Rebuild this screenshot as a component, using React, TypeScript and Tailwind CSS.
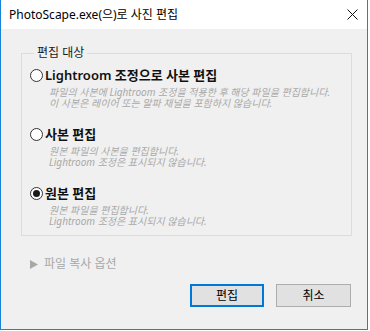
const font = { fontFamily: '"Noto Sans", "Noto Sans CJK KR", sans-serif' };

type Option = { label: string; lines: string[]; checked?: boolean };

const options: Option[] = [
  {
    label: "Lightroom 조정으로 사본 편집",
    lines: [
      "파일의 사본에 Lightroom 조정을 적용한 후 해당 파일을 편집합니다.",
      "이 사본은 레이어 또는 알파 채널을 포함하지 않습니다.",
    ],
  },
  {
    label: "사본 편집",
    lines: ["원본 파일의 사본을 편집합니다.", "Lightroom 조정은 표시되지 않습니다."],
  },
  {
    label: "원본 편집",
    lines: ["원본 파일을 편집합니다.", "Lightroom 조정은 표시되지 않습니다."],
    checked: true,
  },
];

function Radio({ checked }: { checked?: boolean }) {
  return (
    <span className="w-[13px] h-[13px] rounded-full border border-[#333333] bg-white flex items-center justify-center shrink-0">
      {checked && <span className="w-[7px] h-[7px] rounded-full bg-[#1a1a1a]" />}
    </span>
  );
}

export default function App() {
  return (
    <div className="w-[370px] h-[331px] bg-white" style={font}>
      <div className="w-[368px] h-[330px] flex flex-col border-l border-r border-b border-[#1883d7]">
        {/* Title bar */}
        <div className="h-[29px] bg-white flex items-center justify-between pl-[8px] pr-[9px] shrink-0">
          <span className="text-[12px] text-black leading-none">PhotoScape.exe(으)로 사진 편집</span>
          <svg width="11" height="11" viewBox="0 0 11 11" className="mt-[-1px]">
            <path d="M0.5 0.5 L10.5 10.5 M10.5 0.5 L0.5 10.5" stroke="#111" strokeWidth="1" />
          </svg>
        </div>

        {/* Body */}
        <div className="flex-1 bg-[#f0f0f0] flex flex-col pt-[16px]">
          <fieldset className="ml-[20px] w-[331px] border border-[#dcdcdc] pl-[8px] pt-[5px] pb-[8px] flex flex-col gap-[16px]">
            <legend className="ml-[4px] px-[3px] text-[12px] leading-[16px] text-[#1a1a1a]">편집 대상</legend>
            {options.map((o) => (
              <div key={o.label} className="flex flex-col">
                <div className="flex items-center h-[18px] gap-[2px]">
                  <Radio checked={o.checked} />
                  <span className="text-[13px] font-semibold text-[#111] leading-[18px]">{o.label}</span>
                </div>
                <p className="mt-[3px] pl-[19px] text-[10px] italic leading-[11px] text-[#a8a8a8] whitespace-nowrap">
                  {o.lines[0]}
                  <br />
                  {o.lines[1]}
                </p>
              </div>
            ))}
          </fieldset>

          <div className="ml-[29px] mt-[20px] h-[16px] flex items-center gap-[6px] text-[#a8a8a8]">
            <svg width="8" height="9" viewBox="0 0 8 9">
              <path d="M0 0 L8 4.5 L0 9 Z" fill="#a8a8a8" />
            </svg>
            <span className="text-[12px] leading-[16px]">파일 복사 옵션</span>
          </div>

          <div className="mt-[12px] flex justify-end gap-[12px] pr-[16px]">
            <button className="w-[74px] h-[23px] bg-[#e1e1e1] border-2 border-[#0078d7] text-[12px] text-black flex items-center justify-center">
              편집
            </button>
            <button className="w-[75px] h-[23px] bg-[#e1e1e1] border border-[#adadad] text-[12px] text-black flex items-center justify-center">
              취소
            </button>
          </div>
        </div>
      </div>
    </div>
  );
}
